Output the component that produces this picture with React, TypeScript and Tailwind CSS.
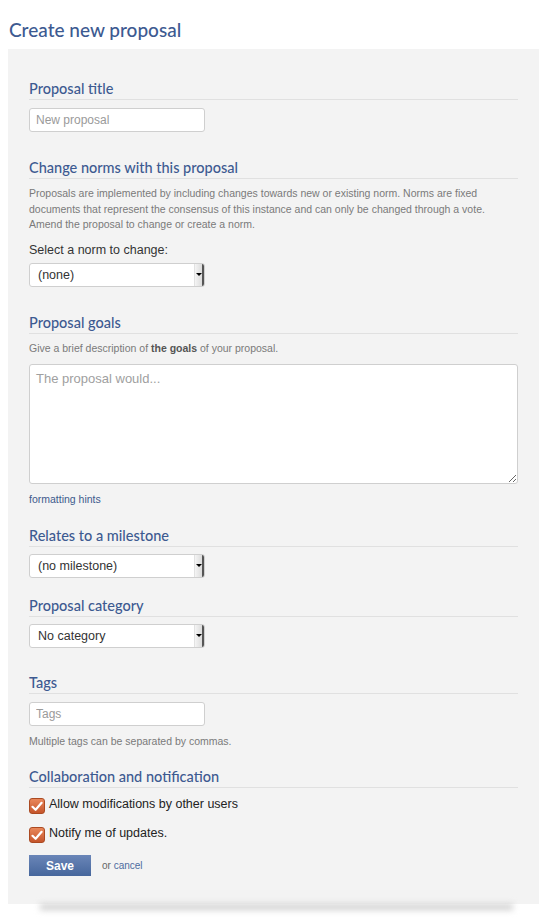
import React from 'react';

const heading =
  "h-[21px] border-b border-[#e0e0e0] text-[14.5px] leading-[20px] text-[#3d5a91] font-['Lato',sans-serif] font-medium";
const help = "text-[10.5px] leading-[15.5px]";

function Select({ value }: { value: string }) {
  return (
    <div className="flex h-[24px] w-[176px] items-stretch overflow-hidden rounded-[3px] border border-[#cfcfcf] bg-white">
      <span className="flex-1 pl-[8px] text-[12.5px] leading-[22px] text-[#333]">{value}</span>
      <span className="flex w-[10px] items-center justify-center border-l border-[#e2e2e2] border-r-2 border-r-[#555] bg-gradient-to-r from-[#f4f4f4] to-[#dcdcdc]">
        <span className="h-0 w-0 border-x-[3px] border-t-[3px] border-x-transparent border-t-black" />
      </span>
    </div>
  );
}

function Check({ label }: { label: string }) {
  return (
    <label className="flex items-start gap-[4px]">
      <span className="mt-[1px] flex h-[16px] w-[16px] items-center justify-center rounded-[3px] border border-[#ab4a22] bg-gradient-to-b from-[#e9875a] to-[#c5552b]">
        <svg width="12" height="11" viewBox="0 0 12 11">
          <path d="M1.5 5.8 L4.6 8.8 L10.6 1.8" fill="none" stroke="white" strokeWidth="2.2" strokeLinecap="round" strokeLinejoin="round" />
        </svg>
      </span>
      <span className="text-[12.5px] leading-[14px] text-[#222]">{label}</span>
    </label>
  );
}

export default function App() {
  return (
    <div className="min-h-[918px] bg-white font-['Liberation_Sans',Arial,sans-serif]">
      <h1 className="pl-[9px] pt-[17px] text-[19px] leading-[26px] text-[#3d5a91] font-['Lato',sans-serif] font-medium">
        Create new proposal
      </h1>
      <div className="mt-[6px] ml-[8px] w-[531px] bg-[#f3f3f3] px-[21px] pt-[30px] pb-[28px]">
        <h2 className={heading}>Proposal title</h2>
        <input
          placeholder="New proposal"
          className="mt-[8px] block h-[24px] w-[176px] rounded-[3px] border border-[#cfcfcf] bg-white px-[6px] text-[12px] placeholder:text-[#9a9a9a] outline-none"
        />

        <h2 className={`mt-[26px] ${heading}`}>Change norms with this proposal</h2>
        <p className={`mt-[7px] ${help} text-[#7a7a7a]`}>
          Proposals are implemented by including changes towards new or existing norm. Norms are fixed
          documents that represent the consensus of this instance and can only be changed through a vote.
          Amend the proposal to change or create a norm.
        </p>
        <div className="mt-[8px] text-[12.5px] leading-[18px] text-[#333]">Select a norm to change:</div>
        <div className="mt-[4px]">
          <Select value="(none)" />
        </div>

        <h2 className={`mt-[26px] ${heading}`}>Proposal goals</h2>
        <p className={`mt-[7px] ${help} text-[#7a7a7a]`}>
          Give a brief description of <b className="text-[#555]">the goals</b> of your proposal.
        </p>
        <textarea
          placeholder="The proposal would..."
          className="mt-[8px] block h-[120px] w-[489px] rounded-[3px] border border-[#cfcfcf] bg-white px-[6px] py-[4px] text-[13px] placeholder:text-[#a0a0a0] outline-none"
        />
        <a className={`mt-[8px] block ${help} text-[#3d5a8c]`}>formatting hints</a>

        <h2 className={`mt-[18px] ${heading}`}>Relates to a milestone</h2>
        <div className="mt-[7px]">
          <Select value="(no milestone)" />
        </div>

        <h2 className={`mt-[18px] ${heading}`}>Proposal category</h2>
        <div className="mt-[7px]">
          <Select value="No category" />
        </div>

        <h2 className={`mt-[25px] ${heading}`}>Tags</h2>
        <input
          placeholder="Tags"
          className="mt-[8px] block h-[24px] w-[176px] rounded-[3px] border border-[#cfcfcf] bg-white px-[6px] text-[12px] placeholder:text-[#9a9a9a] outline-none"
        />
        <p className={`mt-[8px] ${help} text-[#7a7a7a]`}>Multiple tags can be separated by commas.</p>

        <h2 className={`mt-[18px] ${heading}`}>Collaboration and notification</h2>
        <div className="mt-[9px] flex flex-col gap-[12px]">
          <Check label="Allow modifications by other users" />
          <Check label="Notify me of updates." />
        </div>
        <div className="mt-[12px] flex items-center gap-[11px]">
          <button className="h-[21px] w-[62px] bg-gradient-to-b from-[#6a86b8] to-[#46669c] text-[12px] font-bold text-white">
            Save
          </button>
          <span className="text-[10px] text-[#666]">
            or <a className="text-[#4d6ba0]">cancel</a>
          </span>
        </div>
      </div>
      <div className="ml-[40px] h-[6px] w-[473px] bg-[#cfcfcf] blur-[3px]" />
    </div>
  );
}
